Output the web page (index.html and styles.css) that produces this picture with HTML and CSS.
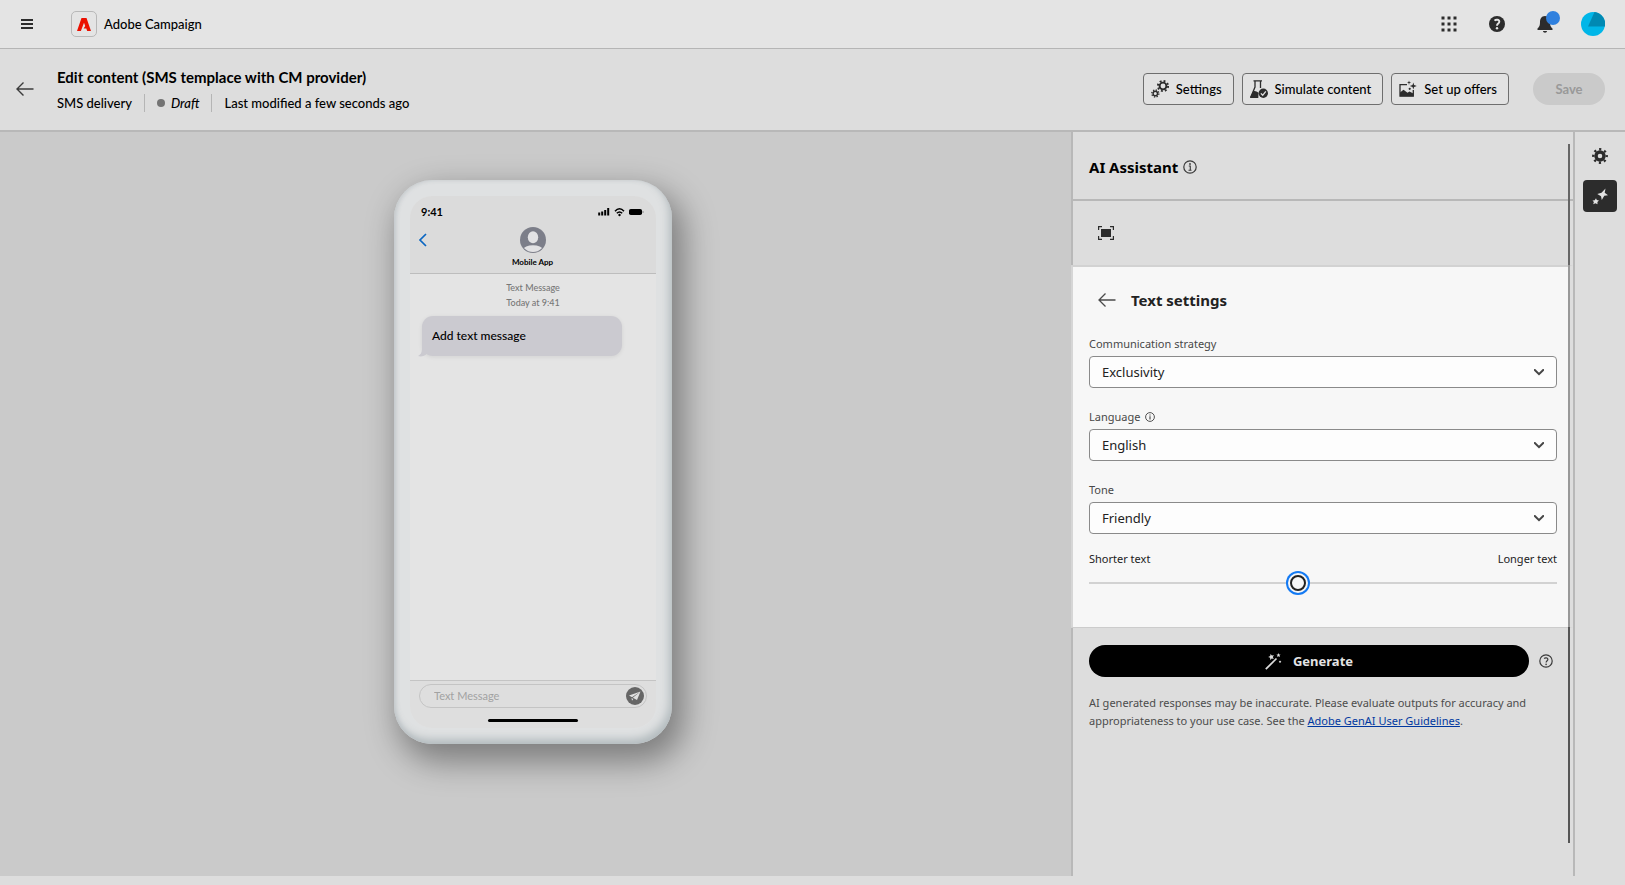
FILE: index.html
```
<!DOCTYPE html>
<html lang="en">
<head>
<meta charset="utf-8">
<title>Adobe Campaign</title>
<link rel="stylesheet" href="styles.css">
</head>
<body>
<header class="topbar">
  <button class="icon-btn menu-btn" aria-label="Menu">
    <svg width="12" height="10" viewBox="0 0 12 10"><path d="M0 1h12M0 5h12M0 9h12" stroke="#2c2c2c" stroke-width="2"/></svg>
  </button>
  <span class="logo">
    <svg width="14" height="13" viewBox="0 0 14 13"><path fill="#eb1000" d="M4.500 0h5L14 13h-3.800l-.9-2.600H6.600L8.200 8 7 4.700 3.900 13H0z"/></svg>
  </span>
  <span class="app-name">Adobe Campaign</span>
  <nav class="top-actions">
    <button class="icon-btn" aria-label="Apps">
      <svg width="16" height="16" viewBox="0 0 16 16" fill="#2c2c2c"><path d="M.5.5h3v3h-3zM6.500.5h3v3h-3zM12.500.5h3v3h-3zM.5 6.500h3v3h-3zM6.500 6.500h3v3h-3zM12.500 6.500h3v3h-3zM.5 12.500h3v3h-3zM6.500 12.500h3v3h-3zM12.500 12.500h3v3h-3z"/></svg>
    </button>
    <button class="icon-btn" aria-label="Help">
      <svg width="16" height="16" viewBox="0 0 16 16"><circle cx="8" cy="8" r="8" fill="#2c2c2c"/><path d="M5.500 4.600C6.800 3.300 10.300 3.200 10.300 5.700c0 1.900-2.300 1.900-2.300 4" fill="none" stroke="#e4e4e4" stroke-width="1.900"/><circle cx="8" cy="12.200" r="1.200" fill="#e4e4e4"/></svg>
    </button>
    <button class="icon-btn bell" aria-label="Notifications">
      <svg width="16" height="18" viewBox="0 0 16 18" fill="#2c2c2c"><path d="M8 1C4.500 1 3 4 3 7c0 4-1 5-2.500 6.500V15h15v-1.500C14 12 13 11 13 7c0-3-1.500-6-5-6zM6 16h4c0 2.300-4 2.300-4 0z"/></svg>
      <span class="badge"></span>
    </button>
    <button class="icon-btn" aria-label="Account">
      <svg width="24" height="24" viewBox="0 0 24 24"><circle cx="12" cy="12" r="12" fill="#00b6e8"/><path fill="#0089b3" d="M13.500.1A12 12 0 0 1 24 14.500H7z"/></svg>
    </button>
  </nav>
</header>

<section class="page-head">
  <button class="icon-btn back-btn" aria-label="Back">
    <svg width="18" height="14" viewBox="0 0 18 14"><path d="M17.500 7H1M7.500.5L1 7l6.500 6.500" fill="none" stroke="#3c3c3c" stroke-width="1.400"/></svg>
  </button>
  <div class="page-info">
    <h1>Edit content (SMS templace with CM provider)</h1>
    <div class="meta">
      <span>SMS delivery</span>
      <span class="status"><i class="dot"></i><em>Draft</em></span>
      <span>Last modified a few seconds ago</span>
    </div>
  </div>
  <div class="page-actions">
    <button class="action">
      <svg width="18" height="18" viewBox="0 0 18 18" fill="none" stroke="#2c2c2c"><circle cx="12" cy="6" r="3.400" stroke-width="1.900"/><circle cx="12" cy="6" r="5.100" stroke-width="1.900" stroke-dasharray="1.900 2.105"/><circle cx="4.300" cy="13.500" r="2.200" stroke-width="1.400"/><circle cx="4.300" cy="13.500" r="3.500" stroke-width="1.400" stroke-dasharray="1.300 1.449"/></svg>
      Settings
    </button>
    <button class="action">
      <svg width="18" height="18" viewBox="0 0 18 18"><path d="M3.500.8h8.500M5 1v6L.9 17M10.500 1v7" fill="none" stroke="#2c2c2c" stroke-width="1.300"/><path d="M3 11.500c2-1 3.500 0 5.500 1.200L8.300 18H.8c-.8 0-.9-.6-.6-1.200z" fill="#2c2c2c"/><circle cx="13.300" cy="13.300" r="4.700" fill="#2c2c2c"/><path d="M10.900 13.400l1.800 1.900 3.100-4" fill="none" stroke="#e3e3e3" stroke-width="1.300"/></svg>
      Simulate content
    </button>
    <button class="action">
      <svg width="18" height="18" viewBox="0 0 18 18"><path d="M8 4.700H1v11.500h13.300V10" fill="none" stroke="#2c2c2c" stroke-width="1.300"/><path d="M1 12.500l3.500-2.700 4 3 2-1.400 3.800 2.200v2.600H1z" fill="#2c2c2c"/><circle cx="10.700" cy="8.800" r="1.100" fill="#2c2c2c"/><path d="M14.300 2.500l.8 2.500 2.700 1-2.700 1-.8 2.500-.8-2.500-2.700-1 2.700-1zM10 .5l.5 1.500 1.700.5-1.700.6L10 5l-.5-1.900L8 2.500 9.500 2z" fill="#2c2c2c"/></svg>
      Set up offers
    </button>
    <button class="save" disabled>Save</button>
  </div>
</section>

<main class="workspace">
  <div class="canvas">
    <div class="phone">
      <div class="screen">
        <div class="phone-head">
          <div class="status-bar">
            <b>9:41</b>
            <svg width="46" height="10" viewBox="0 0 46 10"><path d="M1.200 5.500v3M4.200 4.500v4M7.200 3v5.500M10.200 1v7.500" stroke="#000" stroke-width="2" /><path d="M17 4.200c2.800-3.200 6.200-3.200 9 0M18.800 6.300c1.800-1.900 3.600-1.900 5.400 0" fill="none" stroke="#000" stroke-width="1.500"/><circle cx="21.500" cy="8" r="1.200"/><rect x="31" y="2" width="13" height="6" rx="1.800"/><path d="M45 4v2" stroke="#888"/></svg>
          </div>
          <div class="contact">
            <svg class="chev" width="9" height="14" viewBox="0 0 9 14"><path d="M8 1L2 7l6 6" fill="none" stroke="#0a66c2" stroke-width="1.700"/></svg>
            <svg width="26" height="26" viewBox="0 0 26 26"><defs><clipPath id="face"><circle cx="13" cy="13" r="12"/></clipPath></defs><circle cx="13" cy="13" r="13" fill="#7c7e89"/><g clip-path="url(#face)" fill="#e2e2e4"><ellipse cx="13" cy="10.300" rx="5.200" ry="6"/><ellipse cx="13" cy="22.500" rx="9.500" ry="4.200"/></g></svg>
          </div>
          <b class="contact-name">Mobile App</b>
        </div>
        <div class="chat">
          <p class="stamp">Text Message<br>Today at 9:41</p>
          <div class="bubble">
            Add text message
            <svg class="tail" width="14" height="14" viewBox="0 0 14 14"><path d="M4 0v5c0 4-2 6-4 7 3 1 7 0 8.500-2H14V0z" fill="#cbcad0"/></svg>
          </div>
        </div>
        <div class="composer">
          <div class="compose-row">
            <input type="text" placeholder="Text Message" aria-label="Text Message">
            <button class="send" aria-label="Send">
              <svg width="18" height="18" viewBox="0 0 18 18"><circle cx="9" cy="9" r="9" fill="#666"/><path d="M14.500 4.500L3 8.500l3 1.800zM14.500 4.500L6.800 10.800l4.200 2.200zM5.500 11l1.800 1-1.300 1.800z" fill="#e0e0e0"/></svg>
            </button>
          </div>
          <div class="home-bar"></div>
        </div>
      </div>
    </div>
  </div>

  <aside class="assistant">
    <div class="assistant-title">
      <h2>AI Assistant</h2>
      <svg width="14" height="14" viewBox="0 0 14 14"><circle cx="7" cy="7" r="6.200" fill="none" stroke="#3a3a3a" stroke-width="1.200"/><path d="M5.800 6h1.500v4M5.500 10.200h3" fill="none" stroke="#3a3a3a" stroke-width="1.100"/><circle cx="7" cy="4" r=".9" fill="#3a3a3a"/></svg>
    </div>
    <div class="assistant-tools">
      <button class="icon-btn" aria-label="Select component">
        <svg width="16" height="14" viewBox="0 0 16 14"><path d="M3 3h10v8H3z" fill="#2c2c2c"/><path d="M.6 4V.6H4M12 .6h3.400V4M15.400 10v3.400H12M4 13.400H.6V10" fill="none" stroke="#2c2c2c" stroke-width="1.200"/></svg>
      </button>
    </div>
    <form class="settings">
      <div class="settings-title">
        <button type="button" class="icon-btn" aria-label="Back to assistant">
          <svg width="18" height="14" viewBox="0 0 18 14"><path d="M17.500 7H1M7.500.5L1 7l6.500 6.500" fill="none" stroke="#4b4b4b" stroke-width="1.300"/></svg>
        </button>
        <h3>Text settings</h3>
      </div>
      <div class="field">
        <label for="strategy">Communication strategy</label>
        <div class="picker">
          <select id="strategy"><option>Exclusivity</option></select>
          <svg width="10" height="7" viewBox="0 0 10 7"><path d="M.8 1L5 5.200 9.200 1" fill="none" stroke="#464646" stroke-width="2" stroke-linecap="round"/></svg>
        </div>
      </div>
      <div class="field">
        <label for="language">Language
          <svg width="10" height="10" viewBox="0 0 10 10"><circle cx="5" cy="5" r="4.400" fill="none" stroke="#505050"/><path d="M5 4.300v3.200M5 2.500v1" stroke="#505050" stroke-width="1.200"/></svg>
        </label>
        <div class="picker">
          <select id="language"><option>English</option></select>
          <svg width="10" height="7" viewBox="0 0 10 7"><path d="M.8 1L5 5.200 9.200 1" fill="none" stroke="#464646" stroke-width="2" stroke-linecap="round"/></svg>
        </div>
      </div>
      <div class="field">
        <label for="tone">Tone</label>
        <div class="picker">
          <select id="tone"><option>Friendly</option></select>
          <svg width="10" height="7" viewBox="0 0 10 7"><path d="M.8 1L5 5.200 9.200 1" fill="none" stroke="#464646" stroke-width="2" stroke-linecap="round"/></svg>
        </div>
      </div>
      <div class="length">
        <div class="length-labels"><label for="length">Shorter text</label><span>Longer text</span></div>
        <input type="range" id="length" min="1" max="10" value="5">
      </div>
    </form>
    <div class="assistant-foot">
      <div class="generate-row">
        <button class="generate">
          <svg width="17" height="17" viewBox="0 0 17 17"><path d="M.8 16.200L11.500 5.500" stroke="#ddd" stroke-width="1.700"/><path d="M5.500 1l1.400 1.600L9 2.200 7.800 4l1 2-2.100-.6L5.200 7l-.1-2.200L3.200 3.900l2-.8zM13.500 0l.6 1.400 1.500.1-1.100 1 .4 1.500-1.400-.8-1.300.8.300-1.500-1.100-1 1.500-.1zM15 7.500l1.300 1.300L15 10l-1.200-1.200z" fill="#ddd"/></svg>
          Generate
        </button>
        <svg width="14" height="14" viewBox="0 0 14 14"><circle cx="7" cy="7" r="6.200" fill="none" stroke="#3a3a3a" stroke-width="1.200"/><path d="M5.200 4.700C6 3.500 9 3.600 8.900 5.400 8.800 6.700 7.100 6.800 7.100 8.600" fill="none" stroke="#3a3a3a" stroke-width="1.200"/><circle cx="7.100" cy="10.400" r=".8" fill="#3a3a3a"/></svg>
      </div>
      <p class="note">AI generated responses may be inaccurate. Please evaluate outputs for accuracy and appropriateness to your use case. See the <a href="#">Adobe GenAI User Guidelines</a>.</p>
    </div>
    <div class="scroll-thumb"></div>
  </aside>

  <nav class="rail">
    <button class="rail-btn" aria-label="Settings">
      <svg width="16" height="16" viewBox="0 0 16 16" fill="none" stroke="#2c2c2c"><circle cx="8" cy="8" r="4" stroke-width="3.400"/><circle cx="8" cy="8" r="6.700" stroke-width="2.400" stroke-dasharray="2.200 3.062" stroke-dashoffset="1.100"/></svg>
    </button>
    <button class="rail-btn active" aria-label="AI Assistant">
      <svg width="16" height="17" viewBox="0 0 16 17" fill="#e2e2e2"><path d="M13.500.5l-.8 4.300L16 7.300l-3.700.5L9.800 12 9 8.200 5.300 6l4.200-1.200zM4 10.200l.8 1.800 2.200.4-1.600 1.600.1 2.300-2-1-2.300.9.700-2.100L.5 12.400l2.200-.2z"/></svg>
    </button>
  </nav>
</main>
</body>
</html>
```
FILE: styles.css
```
* { box-sizing: border-box; }

body {
  margin: 0;
  min-height: 100vh;
  display: flex;
  flex-direction: column;
  padding-bottom: 9px;
  background: #ddd;
  color: #000;
  font-family: Lato, "Open Sans", sans-serif;
  font-size: 13px;
  line-height: 18px;
}

button, input, select { font: inherit; color: inherit; }
h1, h2, h3, p { margin: 0; }
svg { display: block; flex: none; }

.icon-btn {
  display: flex;
  padding: 0;
  border: 0;
  background: none;
}

.topbar {
  display: flex;
  align-items: center;
  height: 49px;
  padding: 0 20px 0 21px;
  border-bottom: 1px solid #b5b5b5;
  background: #e4e4e4;
}
.logo {
  display: flex;
  align-items: center;
  justify-content: center;
  width: 26px;
  height: 26px;
  margin: 0 7px 0 38px;
  border: 1px solid #b8b8b8;
  border-radius: 5px;
}
.app-name { font-weight: 500; }
.top-actions {
  display: flex;
  align-items: center;
  gap: 32px;
  margin-left: auto;
}
.bell { position: relative; }
.badge {
  position: absolute;
  top: -4px;
  right: -7px;
  width: 14px;
  height: 14px;
  border-radius: 50%;
  background: #2f80de;
}
.top-actions .icon-btn:last-child { margin-left: -4px; }

.page-head {
  display: flex;
  align-items: center;
  height: 83px;
  padding: 0 20px 2px 16px;
  border-bottom: 2px solid #b8b8b8;
}
.page-info {
  margin-left: 23px;
  padding-top: 2px;
}
.page-info h1 {
  font-size: 15px;
  line-height: 20px;
  font-weight: 700;
}
.meta {
  display: flex;
  margin-top: 7px;
  font-weight: 500;
}
.meta > span + span {
  margin-left: 12px;
  padding-left: 12px;
  border-left: 1px solid #b5b5b5;
}
.status {
  display: flex;
  align-items: center;
  gap: 6px;
}
.dot {
  width: 8px;
  height: 8px;
  border-radius: 50%;
  background: #747474;
}
.page-actions {
  display: flex;
  gap: 8px;
  margin-left: auto;
}
.action {
  display: flex;
  align-items: center;
  gap: 7px;
  height: 32px;
  padding: 0 11px 0 7px;
  border: 1px solid #6e6e6e;
  border-radius: 4px;
  background: #e2e2e2;
  font-weight: 500;
}
.save {
  width: 72px;
  height: 32px;
  margin-left: 16px;
  border: 0;
  border-radius: 16px;
  background: #cacaca;
  color: #999;
  font-weight: 700;
}

.workspace {
  display: flex;
  flex: 1;
}
.canvas {
  display: flex;
  flex: 1;
  justify-content: center;
  align-items: flex-start;
  padding: 48px 5px 48px 0;
  background: #cacaca;
}

.phone {
  display: flex;
  width: 278px;
  min-height: 564px;
  padding: 16px;
  border-radius: 38px;
  background: #dfe1e2;
  box-shadow: inset -3px -5px 8px #b4bcbf, inset 2px 0 4px #c8cccf, 8px 14px 32px 4px rgba(0, 0, 0, .38);
}
.screen {
  display: flex;
  flex: 1;
  flex-direction: column;
  overflow: hidden;
  border-radius: 22px;
  background: #e4e4e4;
}
.phone-head {
  height: 78px;
  padding: 9px 12px 0 11px;
  border-bottom: 1px solid #bdbdbd;
  background: #dbdbdb;
  text-align: center;
}
.status-bar {
  display: flex;
  align-items: center;
  justify-content: space-between;
  height: 14px;
  font-size: 11px;
}
.contact {
  display: grid;
  grid-template-columns: 1fr auto 1fr;
  align-items: center;
  margin-top: 8px;
}
.chev { margin-left: -3px; }
.contact-name {
  display: block;
  font-size: 8px;
  line-height: 18px;
}
.chat {
  flex: 1;
  padding: 6px 12px;
}
.stamp {
  color: #777;
  font-size: 9px;
  line-height: 15px;
  font-weight: 500;
  text-align: center;
}
.bubble {
  position: relative;
  width: 200px;
  margin-top: 6px;
  padding: 11px 10px;
  border-radius: 11px;
  background: #cbcad0;
  box-shadow: 0 1px 4px rgba(0, 0, 0, .08);
  font-size: 12px;
  font-weight: 500;
}
.tail {
  position: absolute;
  left: -4px;
  bottom: -2px;
}
.composer {
  padding: 3px 9px 6px;
  border-top: 1px solid #c4c4c4;
  background: #dedede;
}
.compose-row {
  display: flex;
  align-items: center;
  height: 24px;
  padding: 0 2px 0 14px;
  border: 1px solid #c4c4c4;
  border-radius: 12px;
}
.compose-row input {
  flex: 1;
  min-width: 0;
  padding: 0;
  border: 0;
  background: none;
  font-size: 11px;
}
.compose-row input::placeholder { color: #a2a2a2; }
.send {
  padding: 0;
  border: 0;
  background: none;
}
.home-bar {
  width: 90px;
  height: 3px;
  margin: 11px auto 0;
  border-radius: 2px;
  background: #000;
}

.assistant {
  position: relative;
  display: flex;
  flex-direction: column;
  flex: 0 0 502px;
  font-family: "Noto Sans", "Open Sans", sans-serif;
}
.assistant > div:not(.scroll-thumb), .settings { border-left: 2px solid #b8b8b8; }
.assistant-title {
  display: flex;
  align-items: center;
  gap: 5px;
  height: 69px;
  padding: 2px 0 0 16px;
  border-bottom: 2px solid #b8b8b8;
}
.assistant-title h2, .settings h3 {
  font-size: 15px;
  line-height: 20px;
}
.assistant-tools {
  display: flex;
  align-items: center;
  height: 64px;
  padding-left: 25px;
}
.assistant .settings {
  padding: 23px 11px 36px 16px;
  border-top: 2px solid #d2d2d2;
  border-left-color: #d6d6d6;
  border-right: 5px solid #ddd;
  border-bottom: 1px solid #ccc;
  background: #f7f7f7;
  color: #222;
}
.settings-title {
  display: flex;
  align-items: center;
  gap: 15px;
  margin: 0 0 26px 9px;
}
.field { margin-bottom: 21px; }
.field label {
  display: flex;
  align-items: center;
  gap: 5px;
  padding-bottom: 5px;
  color: #484848;
  font-size: 11px;
  line-height: 15px;
}
.picker { display: grid; }
.picker select, .picker svg { grid-area: 1 / 1; }
.picker select {
  height: 32px;
  width: 100%;
  padding: 0 12px;
  appearance: none;
  border: 1px solid #8a8a8a;
  border-radius: 4px;
  background: #fdfdfd;
  font-size: 13px;
}
.picker svg {
  place-self: center end;
  margin-right: 13px;
  pointer-events: none;
}
.length-labels {
  display: flex;
  justify-content: space-between;
  margin-top: -5px;
  font-size: 11px;
}
#length {
  display: block;
  width: 100%;
  height: 16px;
  margin: 7px 0 0;
  appearance: none;
  background: linear-gradient(#d2d2d2, #d2d2d2) center / 100% 2px no-repeat;
}
#length::-webkit-slider-thumb {
  width: 16px;
  height: 16px;
  appearance: none;
  border: 2px solid #222;
  border-radius: 50%;
  background: #f7f7f7;
  box-shadow: 0 0 0 2px #f7f7f7, 0 0 0 4px #147af3;
}
.assistant-foot {
  flex: 1;
  padding: 17px 20px 0 16px;
}
.generate-row {
  display: flex;
  align-items: center;
  gap: 10px;
}
.generate {
  display: flex;
  flex: 1;
  align-items: center;
  justify-content: center;
  gap: 11px;
  height: 32px;
  border: 0;
  border-radius: 16px;
  background: #000;
  color: #e4e4e4;
  font-size: 13px;
  font-weight: 700;
}
.note {
  margin-top: 17px;
  color: #4c4c4c;
  font-size: 11px;
}
.note a { color: #0038a0; }
.scroll-thumb {
  position: absolute;
  top: 12px;
  right: 3px;
  bottom: 33px;
  width: 2px;
  background: linear-gradient(#666 121px, #999 121px, #999 483px, #555 483px);
}

.rail {
  display: flex;
  flex-direction: column;
  align-items: center;
  flex: 0 0 52px;
  gap: 8px;
  padding-top: 8px;
  border-left: 2px solid #b8b8b8;
}
.rail-btn {
  display: flex;
  align-items: center;
  justify-content: center;
  width: 34px;
  height: 32px;
  padding: 0;
  border: 0;
  border-radius: 4px;
  background: none;
}
.rail-btn.active { background: #2c2c2c; }
```
